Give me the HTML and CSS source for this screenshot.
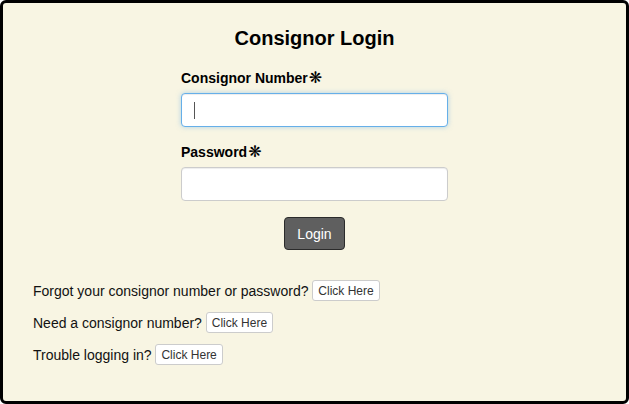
FILE: index.html
```html
<!DOCTYPE html>
<html>
<head>
<meta charset="utf-8">
<link rel="stylesheet" href="styles.css">
</head>
<body>
<div class="panel">
  <h2 class="title">Consignor Login</h2>
  <form class="login-form">
    <label class="field-label" for="num">Consignor Number<span class="req">❋</span></label>
    <input class="field-input focused" id="num" type="text">
    <label class="field-label" for="pw">Password<span class="req">❋</span></label>
    <input class="field-input" id="pw" type="password">
    <div class="actions"><button type="button" class="login-btn">Login</button></div>
  </form>
  <div class="help">
    <p class="help-row">Forgot your consignor number or password? <button type="button" class="small-btn">Click Here</button></p>
    <p class="help-row">Need a consignor number? <button type="button" class="small-btn">Click Here</button></p>
    <p class="help-row">Trouble logging in? <button type="button" class="small-btn">Click Here</button></p>
  </div>
</div>
</body>
</html>
```

FILE: styles.css
```css
html, body {
  margin: 0;
  padding: 0;
  background: #ffffff;
}
body {
  font-family: "Liberation Sans", Arial, sans-serif;
  color: #111;
}
.panel {
  box-sizing: border-box;
  width: 629px;
  height: 404px;
  border: 3px solid #000;
  border-radius: 6px;
  background: #f8f5e3;
  padding: 24px 30px 0 30px;
}
.title {
  margin: 0;
  font-size: 20px;
  line-height: 23px;
  font-weight: bold;
  text-align: center;
  color: #000;
}
.login-form {
  width: 267px;
  margin: 20px auto 0;
  display: flex;
  flex-direction: column;
}
.field-label {
  font-size: 14px;
  font-weight: bold;
  line-height: 16px;
  height: 16px;
  color: #000;
}
.req {
  font-family: "DejaVu Sans", sans-serif;
  font-size: 16px;
  line-height: 16px;
  font-weight: bold;
  margin-left: 1px;
}
.field-input {
  box-sizing: border-box;
  height: 34px;
  margin: 7px 0 17px;
  border: 1px solid #ccc;
  border-radius: 4px;
  background: #fff;
  padding: 6px 12px;
  font-size: 14px;
  font-family: inherit;
  outline: none;
  box-shadow: inset 0 1px 1px rgba(0,0,0,0.075);
}
.field-input.focused {
  border-color: #66afe9;
  box-shadow: inset 0 1px 1px rgba(0,0,0,0.075), 0 0 5px rgba(102,175,233,0.5);
  background: #fff linear-gradient(#555, #555) no-repeat 12px 8px / 1px 17px;
}
.actions {
  display: flex;
  justify-content: center;
  margin-top: -1px;
}
.login-btn {
  box-sizing: border-box;
  width: 61px;
  height: 33px;
  background: #5f5f5f;
  color: #fff;
  border: 1px solid #2b2b2b;
  border-radius: 4px;
  font-family: inherit;
  font-size: 14px;
  padding: 0;
}
.help {
  margin-top: 30px;
  display: flex;
  flex-direction: column;
  gap: 10px;
}
.help-row {
  margin: 0;
  font-size: 14px;
  line-height: 22px;
  color: #111;
}
.small-btn {
  box-sizing: border-box;
  height: 21px;
  padding: 0 5px;
  background: #fff;
  border: 1px solid #ccc;
  border-radius: 3px;
  font-family: inherit;
  font-size: 12px;
  color: #333;
  vertical-align: top;
}
```
